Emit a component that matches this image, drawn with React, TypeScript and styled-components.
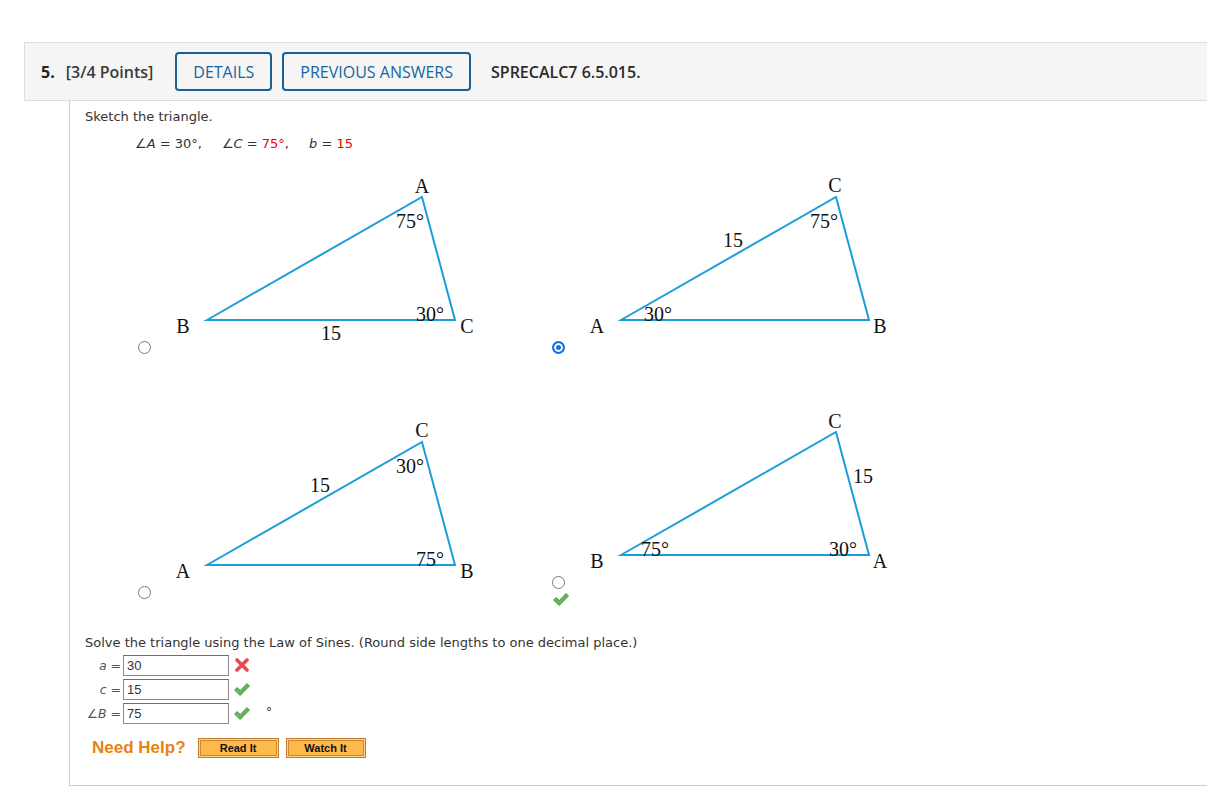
import React from "react";
import styled, { createGlobalStyle } from "styled-components";

const GlobalStyle = createGlobalStyle`
	html, body {
		margin: 0;
		padding: 0;
		background: #ffffff;
		overflow: hidden;
	}
`;

type Label = { text: string; x: number; y: number };
type Choice = {
	id: number;
	labels: Label[];
	selected?: boolean;
	correct?: boolean;
};

const TRIANGLE = "52,146 267,23 300,146";

const choices: Choice[] = [
	{
		id: 1,
		labels: [
			{ text: "A", x: 267, y: 19 },
			{ text: "B", x: 28, y: 159 },
			{ text: "C", x: 312, y: 159 },
			{ text: "15", x: 176, y: 166 },
			{ text: "75°", x: 255, y: 54 },
			{ text: "30°", x: 275, y: 147 },
		],
	},
	{
		id: 2,
		selected: true,
		labels: [
			{ text: "C", x: 266, y: 18 },
			{ text: "A", x: 28, y: 159 },
			{ text: "B", x: 311, y: 159 },
			{ text: "15", x: 164, y: 73 },
			{ text: "75°", x: 255, y: 54 },
			{ text: "30°", x: 89, y: 147 },
		],
	},
	{
		id: 3,
		labels: [
			{ text: "C", x: 267, y: 18 },
			{ text: "A", x: 28, y: 159 },
			{ text: "B", x: 312, y: 159 },
			{ text: "15", x: 165, y: 73 },
			{ text: "30°", x: 255, y: 54 },
			{ text: "75°", x: 275, y: 147 },
		],
	},
	{
		id: 4,
		correct: true,
		labels: [
			{ text: "C", x: 266, y: 19 },
			{ text: "B", x: 28, y: 159 },
			{ text: "A", x: 311, y: 159 },
			{ text: "15", x: 294, y: 74 },
			{ text: "75°", x: 86, y: 147 },
			{ text: "30°", x: 274, y: 147 },
		],
	},
];

const answers = [
	{ name: "a", value: "30", ok: false, unit: "" },
	{ name: "c", value: "15", ok: true, unit: "" },
	{ name: "∠B", value: "75", ok: true, unit: "°" },
];

const Page = styled.div`
	padding: 42px 0 0 24px;
	font-family: "DejaVu Sans", Verdana, sans-serif;
	color: #333;
`;

const Header = styled.div`
	display: flex;
	align-items: center;
	height: 57px;
	margin-right: -20px;
	padding-left: 16px;
	background: #f5f5f5;
	border: 1px solid #dddddd;
	font-family: "Open Sans", sans-serif;
	font-size: 16px;
`;

const Num = styled.span`
	font-weight: 700;
	color: #222;
	margin-right: 11px;
`;

const Points = styled.span`
	font-weight: 600;
	color: #3a3a3a;
	margin-right: 22px;
`;

const HeaderButton = styled.button`
	height: 39px;
	padding: 0 16px;
	margin-right: 10px;
	background: #f5f5f5;
	border: 2px solid #1c5f93;
	border-radius: 4px;
	font-family: "Open Sans", sans-serif;
	font-size: 16px;
	font-weight: 500;
	color: #1565a3;
	cursor: pointer;
`;

const Code = styled.span`
	font-weight: 600;
	color: #2a2a2a;
	margin-left: 10px;
`;

const Body = styled.div`
	margin-left: 45px;
	padding: 7px 0 27px 15px;
	border-left: 1px solid #cccccc;
	border-bottom: 1px solid #cccccc;
	font-size: 13px;
`;

const Prompt = styled.div<{ $gap?: number }>`
	line-height: 18px;
	margin-top: ${ ({ $gap }) => $gap ?? 0 }px;
`;

const Given = styled.div`
	display: flex;
	gap: 20px;
	margin: 9px 0 0 50px;
	line-height: 18px;
	font-size: 13px;
`;

const Var = styled.i`
	font-style: italic;
`;

const Red = styled.span`
	color: #ee0000;
`;

const Choices = styled.div`
	display: grid;
	grid-template-columns: 414px 414px;
	row-gap: 55px;
	align-items: end;
	margin: 21px 0 0 53px;
`;

const ChoiceCell = styled.div`
	display: flex;
	flex-direction: column;
`;

const ChoiceRow = styled.div`
	display: flex;
	align-items: flex-end;
	gap: 4px;
`;

const Radio = styled.span<{ $checked?: boolean }>`
	box-sizing: border-box;
	width: 13px;
	height: 13px;
	border-radius: 50%;
	flex: none;
	border: ${ ({ $checked }) => $checked ? "2px solid #0f6fe8" : "1px solid #7a7a7a" };
	background: ${ ({ $checked }) => $checked ? "#0f6fe8" : "#ffffff" };
	box-shadow: ${ ({ $checked }) => $checked ? "inset 0 0 0 2px #ffffff" : "none" };
`;

const Figure = styled.svg`
	display: block;
	width: 330px;
	height: 180px;
	overflow: visible;

	polygon {
		fill: none;
		stroke: #1b9ddb;
		stroke-width: 2;
	}

	text {
		font-family: "Liberation Serif", "Times New Roman", serif;
		font-size: 20px;
		fill: #111;
		text-anchor: middle;
	}
`;

const Feedback = styled.div`
	box-sizing: border-box;
	height: 10px;
	padding: 4px 0 0 1px;
	overflow: visible;

	svg {
		display: block;
	}
`;

const Answers = styled.div`
	margin-top: 1px;
`;

const AnswerRow = styled.div`
	display: grid;
	grid-template-columns: 36px 106px 20px 30px;
	column-gap: 2px;
	align-items: center;
	height: 24px;
`;

const AnswerLabel = styled.span`
	text-align: right;
	color: #555;
	white-space: nowrap;
	font-size: 12.5px;
`;

const AnswerInput = styled.div`
	box-sizing: border-box;
	height: 21px;
	padding: 2px 3px;
	border: 1px solid #8a8a8a;
	border-top-color: #6e6e6e;
	font-family: "Liberation Sans", Arial, sans-serif;
	font-size: 13px;
	line-height: 15px;
	color: #333;
`;

const Mark = styled.span`
	display: flex;
	justify-content: center;
	align-items: center;
	padding-left: 2px;

	svg {
		flex: none;
		display: block;
	}
`;

const Unit = styled.span`
	padding-left: 13px;
	font-size: 12px;
	color: #333;
	margin-top: -2px;
`;

const Help = styled.div`
	display: flex;
	align-items: center;
	gap: 7px;
	margin: 13px 0 0 7px;
	height: 20px;
`;

const HelpLabel = styled.span`
	font-family: "Liberation Sans", Arial, sans-serif;
	font-weight: 700;
	font-size: 17px;
	color: #e8830f;
	margin-right: 5px;
`;

const HelpButton = styled.button<{ $width: number }>`
	box-sizing: border-box;
	width: ${ ({ $width }) => $width }px;
	height: 20px;
	padding: 0;
	border: 1px solid #c57a2c;
	background: #ffb94a;
	box-shadow: inset 0 0 0 1px #ffd38a, inset 0 0 0 2px #c98a3c;
	font-family: "Liberation Sans", Arial, sans-serif;
	font-weight: 700;
	font-size: 11px;
	color: #111;
	cursor: pointer;
`;

const CheckIcon = () => (
	<svg width="16" height="13" viewBox="0 0 16 13">
		<polygon points="0.5,7 3.3,4.4 6.2,7.6 13,0.5 15.5,3 6.2,12.5" fill="#5fb85a" stroke="#3e8e3a" strokeWidth="0.8" strokeLinejoin="round" />
	</svg>
);

const CrossIcon = () => (
	<svg width="14" height="14" viewBox="0 0 14 14">
		<path d="M2 2 L12 12 M12 2 L2 12" stroke="#e84a4f" strokeWidth="3.6" strokeLinecap="round" />
	</svg>
);

export default function App() {
	return (
		<>
			<GlobalStyle />
			<Page>
				<Header>
					<Num>{ "5." }</Num>
					<Points>{ "[3/4 Points]" }</Points>
					<HeaderButton>{ "DETAILS" }</HeaderButton>
					<HeaderButton>{ "PREVIOUS ANSWERS" }</HeaderButton>
					<Code>{ "SPRECALC7 6.5.015." }</Code>
				</Header>
				<Body>
					<Prompt>{ "Sketch the triangle." }</Prompt>
					<Given>
						<span>∠<Var>A</Var> = 30°,</span>
						<span>∠<Var>C</Var> = <Red>75°</Red>,</span>
						<span><Var>b</Var> = <Red>15</Red></span>
					</Given>
					<Choices>
						{ choices.map(choice => (
							<ChoiceCell key={ choice.id }>
								<ChoiceRow>
									<Radio $checked={ choice.selected } />
									<Figure viewBox="0 0 330 180">
										<polygon points={ TRIANGLE } />
										{ choice.labels.map(label => (
											<text key={ label.text } x={ label.x } y={ label.y }>{ label.text }</text>
										)) }
									</Figure>
								</ChoiceRow>
								{ choice.correct && (
									<Feedback>
										<CheckIcon />
									</Feedback>
								) }
							</ChoiceCell>
						)) }
					</Choices>
					<Prompt $gap={ 35 }>
						{ "Solve the triangle using the Law of Sines. (Round side lengths to one decimal place.)" }
					</Prompt>
					<Answers>
						{ answers.map(answer => (
							<AnswerRow key={ answer.name }>
								<AnswerLabel>
									{ answer.name.startsWith("∠") ? <>∠<Var>B</Var></> : <Var>{ answer.name }</Var> }{ " =" }
								</AnswerLabel>
								<AnswerInput>{ answer.value }</AnswerInput>
								<Mark>{ answer.ok ? <CheckIcon /> : <CrossIcon /> }</Mark>
								<Unit>{ answer.unit }</Unit>
							</AnswerRow>
						)) }
					</Answers>
					<Help>
						<HelpLabel>{ "Need Help?" }</HelpLabel>
						<HelpButton $width={ 81 }>{ "Read It" }</HelpButton>
						<HelpButton $width={ 80 }>{ "Watch It" }</HelpButton>
					</Help>
				</Body>
			</Page>
		</>
	);
}
